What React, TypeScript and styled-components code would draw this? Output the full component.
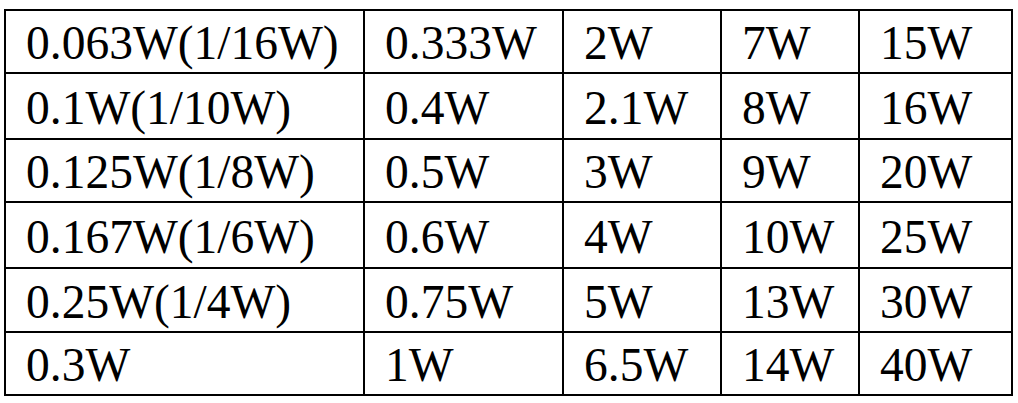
import React from "react";
import styled, { createGlobalStyle } from "styled-components";

const Global = createGlobalStyle`
  html, body { margin: 0; padding: 0; background: #ffffff; }
  body { width: 1018px; height: 403px; overflow: hidden; }
`;

const Page = styled.div`
  padding: 9px 0 0 4px;
`;

const Table = styled.div`
  display: grid;
  grid-template-columns: 357px 197px 156px 136px 151px;
  grid-template-rows: 61px 64px 61px 64px 62px 61px;
  gap: 2px;
  padding: 2px;
  background: #000000;
  width: max-content;
`;

const Cell = styled.div`
  background: #ffffff;
  display: flex;
  align-items: center;
  padding: 3px 0 0 20px;
  box-sizing: border-box;
  font-family: "Liberation Serif", "Times New Roman", serif;
  font-size: 47.5px;
  line-height: 54px;
  color: #000000;
  white-space: nowrap;
`;

const rows: string[][] = [
  ["0.063W(1/16W)", "0.333W", "2W", "7W", "15W"],
  ["0.1W(1/10W)", "0.4W", "2.1W", "8W", "16W"],
  ["0.125W(1/8W)", "0.5W", "3W", "9W", "20W"],
  ["0.167W(1/6W)", "0.6W", "4W", "10W", "25W"],
  ["0.25W(1/4W)", "0.75W", "5W", "13W", "30W"],
  ["0.3W", "1W", "6.5W", "14W", "40W"],
];

export default function App() {
  return (
    <>
      <Global />
      <Page>
        <Table>
          {rows.map((r, i) =>
            r.map((c, j) => <Cell key={`${i}-${j}`}>{c}</Cell>)
          )}
        </Table>
      </Page>
    </>
  );
}
